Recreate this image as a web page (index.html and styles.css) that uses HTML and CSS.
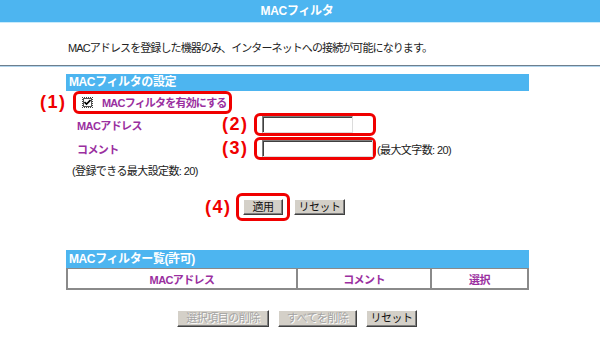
FILE: index.html
```html
<!DOCTYPE html>
<html lang="ja">
<head>
<meta charset="utf-8">
<title>MACフィルタ</title>
<link rel="stylesheet" href="styles.css">
</head>
<body>
<div class="topbar">MACフィルタ</div>
<p class="desc">MACアドレスを登録した機器のみ、インターネットへの接続が可能になります。</p>
<div class="rule"></div>

<div class="panel">
  <div class="sechead">MACフィルタの設定</div>
</div>

<div class="form">
  <div class="row row1">
    <span class="mark m1">(1)</span>
    <span class="hl hl1">
      <span class="cbwrap"><span class="cb"><svg width="7" height="7" viewBox="0 0 7 7"><path d="M0.5 3 L2.5 5 L6.5 1" fill="none" stroke="#000" stroke-width="1.6"/></svg></span></span>
      <span class="lbl strong">MACフィルタを有効にする</span>
    </span>
  </div>
  <div class="row row2">
    <span class="lbl fieldlbl">MACアドレス</span>
    <span class="mark m2">(2)</span>
    <span class="hl hl2"><span class="inp inp-mac"></span></span>
  </div>
  <div class="row row3">
    <span class="lbl fieldlbl">コメント</span>
    <span class="mark m2">(3)</span>
    <span class="hl hl2"><span class="inp inp-cmt"></span></span>
    <span class="note">(最大文字数: 20)</span>
  </div>
  <div class="row row4">(登録できる最大設定数: 20)</div>
  <div class="row row5">
    <span class="mark m4">(4)</span>
    <span class="hl hl4"><button class="btn btn-apply">適用</button></span>
    <button class="btn btn-reset">リセット</button>
  </div>
</div>

<div class="panel panel2">
  <div class="sechead tall">MACフィルター覧(許可)</div>
  <div class="thead">
    <div class="th c1">MACアドレス</div>
    <div class="th c2">コメント</div>
    <div class="th c3">選択</div>
  </div>
</div>

<div class="bottom">
  <button class="btn dis b1">選択項目の削除</button>
  <button class="btn dis b2">すべてを削除</button>
  <button class="btn b3">リセット</button>
</div>
</body>
</html>
```

FILE: styles.css
```css
html, body {
  margin: 0;
  padding: 0;
  background: #ffffff;
}
body {
  font-family: "Liberation Sans", "Noto Sans CJK JP", sans-serif;
  font-size: 11px;
  color: #222;
  width: 600px;
  height: 343px;
  overflow: hidden;
}
.topbar {
  height: 22px;
  line-height: 22px;
  background: #4db5f0;
  border-bottom: 1px solid #c9ebfb;
  color: #fff;
  font-weight: bold;
  font-size: 12px;
  text-align: center;
  padding-right: 6px;
  letter-spacing: -0.3px;
}
.desc {
  margin: 0;
  padding: 18px 0 0 68px;
  line-height: 14px;
  height: 14px;
  letter-spacing: -0.9px;
  color: #222;
  white-space: nowrap;
}
.rule {
  margin-top: 10px;
  height: 0;
  border-top: 1px solid #6e7f8d;
  border-bottom: 1px solid #b2d5ee;
}
.panel {
  margin: 7px 0 0 66px;
  width: 463px;
}
.sechead {
  height: 17px;
  line-height: 17px;
  background: #4db5f0;
  color: #fff;
  font-weight: bold;
  font-size: 12px;
  padding-left: 3px;
  letter-spacing: -0.4px;
}
.sechead.tall {
  height: 18px;
  line-height: 18px;
}
.form {
  margin-left: 40px;
}
.row {
  display: flex;
  align-items: center;
  white-space: nowrap;
}
.mark {
  color: #f00000;
  font-weight: bold;
  font-size: 18px;
  font-family: "Liberation Sans", sans-serif;
  letter-spacing: 1.5px;
  flex-shrink: 0;
}
.m1 { width: 33px; }
.m2 { width: 32px; }
.m4 { width: 31px; }
.hl {
  display: flex;
  align-items: center;
  border: 3px solid #f00000;
  border-radius: 6px;
  box-sizing: border-box;
  flex-shrink: 0;
}
.hl1 {
  width: 159px;
  height: 23px;
  padding-left: 6px;
}
.row1 { height: 22px; }
.cbwrap {
  width: 11px;
  height: 11px;
  border: 1px dotted #444;
  box-sizing: border-box;
  display: flex;
  align-items: center;
  justify-content: center;
  flex-shrink: 0;
}
.cb {
  width: 9px;
  height: 9px;
  box-sizing: border-box;
  border: 1px solid #555;
  background: #fff;
  display: flex;
  align-items: center;
  justify-content: center;
}
.cb svg { display: block; }
.lbl {
  color: #9a2fa0;
  font-weight: bold;
  letter-spacing: -0.6px;
  white-space: nowrap;
}
.hl1 .lbl { margin-left: 9px; letter-spacing: -0.8px; }
.row2 { height: 23px; }
.row3 { height: 23px; margin-top: 1px; }
.fieldlbl {
  width: 145px;
  margin-left: 37px;
  flex-shrink: 0;
}
.hl2 {
  width: 122px;
  height: 23px;
  padding-left: 5px;
}
.inp {
  display: block;
  height: 17px;
  box-sizing: border-box;
  background: #fff;
  border: 1px solid;
  border-color: #7f7f7f #dcdcdc #dcdcdc #7f7f7f;
  box-shadow: inset 1px 1px 0 #404040;
}
.inp-mac { width: 91px; }
.inp-cmt { width: 112px; }
.note {
  margin-left: 1px;
  letter-spacing: -0.6px;
  color: #222;
}
.row4 {
  height: 17px;
  margin-left: 32px;
  margin-top: 1px;
  letter-spacing: -0.6px;
}
.row5 {
  margin-top: 15px;
  margin-left: 165px;
  height: 28px;
}
.hl4 {
  padding: 3px 4px;
  width: 54px;
  height: 28px;
}
.btn {
  font-family: "Liberation Sans", "Noto Sans CJK JP", sans-serif;
  font-size: 11px;
  letter-spacing: -0.5px;
  color: #111;
  background: #d4d0c8;
  height: 16px;
  padding: 0;
  margin: 0;
  box-sizing: border-box;
  border: 1px solid;
  border-color: #ffffff #404040 #404040 #ffffff;
  box-shadow: inset -1px -1px 0 #808080;
  line-height: 13px;
  white-space: nowrap;
}
.btn-apply { width: 40px; }
.btn-reset { width: 51px; margin-left: 4px; }
.panel2 {
  margin-top: 29px;
}
.thead {
  display: flex;
  height: 22px;
  box-sizing: border-box;
  border: 2px solid #8a8a8a;
  border-top: 1px solid #8a8a8a;
}
.th {
  display: flex;
  align-items: center;
  justify-content: center;
  color: #9a2fa0;
  font-weight: bold;
  letter-spacing: -0.6px;
}
.c1 { width: 228px; border-right: 2px solid #8a8a8a; }
.c2 { width: 132px; border-right: 2px solid #8a8a8a; }
.c3 { flex: 1; }
.bottom {
  display: flex;
  margin: 20px 0 0 177px;
  gap: 9px;
}
.bottom .btn {
  height: 17px;
}
.b1 { width: 92px; }
.b2 { width: 79px; }
.b3 { width: 51px; color: #111; }
.dis {
  color: #a3a3a3;
  text-shadow: 1px 1px 0 #fff;
}
```
